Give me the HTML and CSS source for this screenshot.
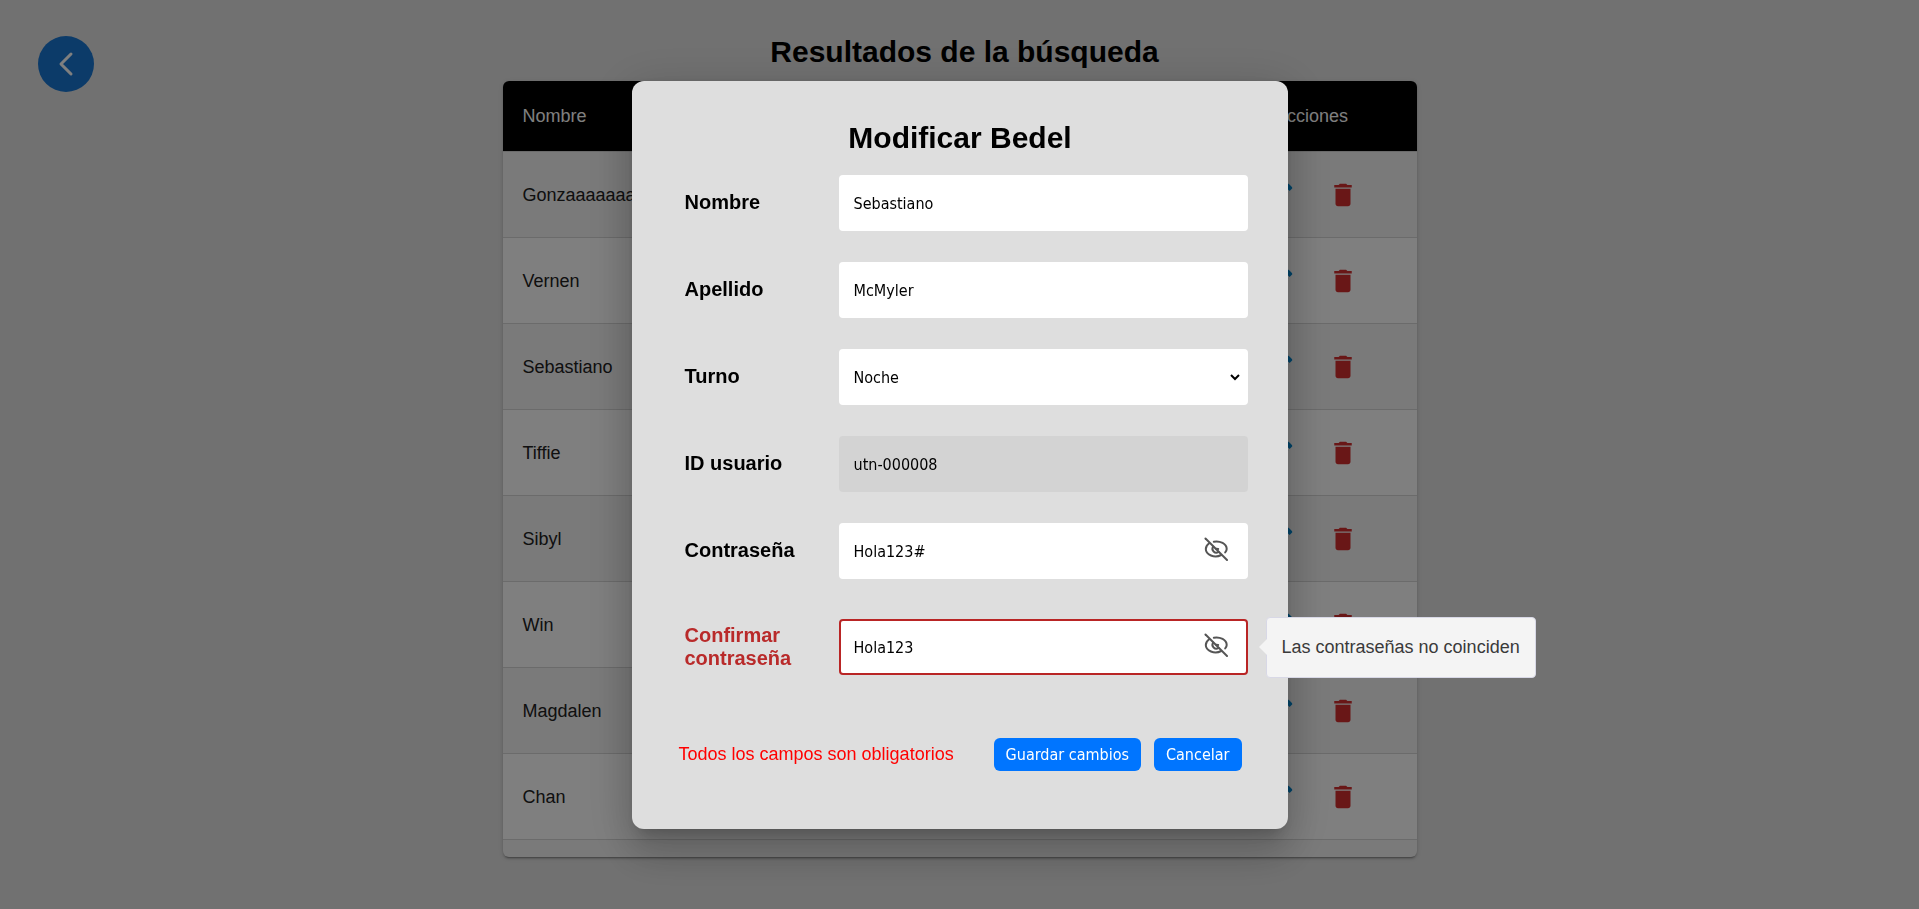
FILE: index.html
```html
<!DOCTYPE html>
<html lang="es">
<head>
<meta charset="utf-8">
<title>Modificar Bedel</title>
<link rel="stylesheet" href="styles.css">
</head>
<body>
<svg class="sprite" aria-hidden="true">
  <symbol id="edit" viewBox="0 0 24 24"><path d="M3 17.25V21h3.75L17.81 9.94l-3.75-3.75L3 17.25zM20.71 7.04c.39-.39.39-1.02 0-1.41l-2.34-2.34c-.39-.39-1.02-.39-1.41 0l-1.83 1.83 3.75 3.75 1.83-1.83z"/></symbol>
  <symbol id="trash" viewBox="0 0 24 24"><path d="M6 19c0 1.1.9 2 2 2h8c1.1 0 2-.9 2-2V7H6v12zM19 4h-3.5l-1-1h-5l-1 1H5v2h14V4z"/></symbol>
  <symbol id="eye-off" viewBox="0 0 24 24"><g fill="none" stroke="currentColor" stroke-width="2" stroke-linecap="round"><path d="M1.500 1.500l21.500 21.500"/><path d="M9.800 4.700C16 3.400 22.700 7 22.700 12c0 1.300-.6 2.400-1.500 3.400"/><path d="M5.200 6.300C3.200 7.700 1.800 9.700 1.800 12c0 5.800 8.600 9.400 15.400 6"/><path d="M9.200 9.600a3.800 3.800 0 0 0 5.300 5.300"/><path d="M12.200 11.800l2 .2"/></g></symbol>
</svg>
<div class="page">
  <div class="side">
    <button class="back" type="button" aria-label="Volver"><svg viewBox="0 0 32 32"><path d="M21 6L11 16l10 10"/></svg></button>
  </div>
  <main>
    <h1 class="heading">Resultados de la búsqueda</h1>
    <div class="card">
      <table class="results">
        <thead><tr><th>Nombre</th><th class="actions">Acciones</th></tr></thead>
        <tbody>
          <tr><td>Gonzaaaaaaaaa</td><td class="actions"><button type="button" class="icon edit" aria-label="Editar"><svg><use href="#edit"/></svg></button><button type="button" class="icon trash" aria-label="Eliminar"><svg><use href="#trash"/></svg></button></td></tr>
          <tr><td>Vernen</td><td class="actions"><button type="button" class="icon edit" aria-label="Editar"><svg><use href="#edit"/></svg></button><button type="button" class="icon trash" aria-label="Eliminar"><svg><use href="#trash"/></svg></button></td></tr>
          <tr><td>Sebastiano</td><td class="actions"><button type="button" class="icon edit" aria-label="Editar"><svg><use href="#edit"/></svg></button><button type="button" class="icon trash" aria-label="Eliminar"><svg><use href="#trash"/></svg></button></td></tr>
          <tr><td>Tiffie</td><td class="actions"><button type="button" class="icon edit" aria-label="Editar"><svg><use href="#edit"/></svg></button><button type="button" class="icon trash" aria-label="Eliminar"><svg><use href="#trash"/></svg></button></td></tr>
          <tr><td>Sibyl</td><td class="actions"><button type="button" class="icon edit" aria-label="Editar"><svg><use href="#edit"/></svg></button><button type="button" class="icon trash" aria-label="Eliminar"><svg><use href="#trash"/></svg></button></td></tr>
          <tr><td>Win</td><td class="actions"><button type="button" class="icon edit" aria-label="Editar"><svg><use href="#edit"/></svg></button><button type="button" class="icon trash" aria-label="Eliminar"><svg><use href="#trash"/></svg></button></td></tr>
          <tr><td>Magdalen</td><td class="actions"><button type="button" class="icon edit" aria-label="Editar"><svg><use href="#edit"/></svg></button><button type="button" class="icon trash" aria-label="Eliminar"><svg><use href="#trash"/></svg></button></td></tr>
          <tr><td>Chan</td><td class="actions"><button type="button" class="icon edit" aria-label="Editar"><svg><use href="#edit"/></svg></button><button type="button" class="icon trash" aria-label="Eliminar"><svg><use href="#trash"/></svg></button></td></tr>
        </tbody>
      </table>
    </div>
  </main>
</div>
<div class="overlay">
  <form class="modal" role="dialog" aria-labelledby="modal-title">
    <h2 class="modal-title" id="modal-title">Modificar Bedel</h2>
    <div class="fields">
      <div class="field"><label for="nombre">Nombre</label><input class="control" id="nombre" type="text" value="Sebastiano"></div>
      <div class="field"><label for="apellido">Apellido</label><input class="control" id="apellido" type="text" value="McMyler"></div>
      <div class="field"><label for="turno">Turno</label><select class="control" id="turno"><option>Noche</option></select></div>
      <div class="field"><label for="usuario">ID usuario</label><input class="control locked" id="usuario" type="text" value="utn-000008" readonly></div>
      <div class="field"><label for="clave">Contraseña</label><div class="wrap"><input class="control" id="clave" type="text" value="Hola123#"><button type="button" class="toggle" aria-label="Ocultar contraseña"><svg><use href="#eye-off"/></svg></button></div></div>
    </div>
    <div class="field invalid">
      <label for="confirmar">Confirmar contraseña</label>
      <div class="wrap"><input class="control" id="confirmar" type="text" value="Hola123"><button type="button" class="toggle" aria-label="Ocultar confirmación"><svg><use href="#eye-off"/></svg></button><div class="tooltip" role="tooltip">Las contraseñas no coinciden</div></div>
    </div>
    <div class="footer">
      <p class="error">Todos los campos son obligatorios</p>
      <button class="btn" type="submit">Guardar cambios</button>
      <button class="btn" type="button">Cancelar</button>
    </div>
  </form>
</div>
</body>
</html>
```

FILE: styles.css
```css
* { box-sizing: border-box; }

body {
  margin: 0;
  min-height: 100vh;
  background: #e2e2e2;
  color: #000;
  font-family: "Liberation Sans", Arial, sans-serif;
  font-size: 18px;
}

button { font: inherit; cursor: pointer; }

.sprite { display: none; }

/* Results page */
.page {
  display: grid;
  grid-template-columns: 1fr minmax(0, 914px) 1fr;
  padding: 0 38px;
}

.side { padding-top: 36px; }

.back {
  display: grid;
  place-items: center;
  width: 56px;
  height: 56px;
  padding: 0;
  border: 0;
  border-radius: 50%;
  background: #1976d2;
}

.back svg {
  width: 32px;
  height: 32px;
  fill: none;
  stroke: #fff;
  stroke-width: 3;
  stroke-linecap: round;
  stroke-linejoin: round;
}

.heading {
  margin: 0;
  padding: 34px 0 11px 10px;
  font-size: 30px;
  line-height: 36px;
  text-align: center;
}

.card {
  padding-bottom: 17px;
  border-radius: 6px;
  overflow: hidden;
  background: #f4f4f4;
  box-shadow: 0 3px 1px -2px rgba(0, 0, 0, .2), 0 2px 2px rgba(0, 0, 0, .14), 0 1px 5px rgba(0, 0, 0, .12);
}

.results {
  width: 100%;
  table-layout: fixed;
  border-collapse: separate;
  border-spacing: 0;
}

.results th,
.results td {
  padding: 1px 20px 0;
  border-bottom: 1px solid #d6d6d6;
  text-align: left;
}

.results th {
  height: 71px;
  background: #000;
  background-clip: padding-box;
  color: #fff;
  font-weight: 400;
}

.results td {
  height: 86px;
  color: #212121;
}

.results tr:nth-child(even) td { background: #fff; }

.results .actions {
  width: 210px;
  text-align: center;
}

.icon {
  padding: 0;
  border: 0;
  background: none;
  vertical-align: middle;
}

.icon + .icon { margin-left: 32px; }

.icon svg {
  display: block;
  width: 30px;
  height: 30px;
  fill: currentColor;
}

.edit { color: #0288d1; }
.trash { color: #d32f2f; }

/* Dialog */
.overlay {
  position: fixed;
  inset: 0;
  display: grid;
  place-items: center;
  background: rgba(0, 0, 0, .5);
}

.modal {
  width: 100%;
  max-width: 656px;
  padding: 39px 40px 58px 53px;
  border-radius: 12px;
  background: #dedede;
  box-shadow: 0 11px 15px -7px rgba(0, 0, 0, .2), 0 24px 38px 3px rgba(0, 0, 0, .14), 0 9px 46px 8px rgba(0, 0, 0, .12);
}

.modal-title {
  margin: 0 12px 19px 0;
  font-size: 30px;
  line-height: 36px;
  text-align: center;
}

.fields {
  display: grid;
  gap: 31px;
}

.field {
  display: grid;
  grid-template-columns: 154px 1fr;
  align-items: center;
}

.field label {
  padding-right: 24px;
  font-size: 20px;
  font-weight: 700;
  line-height: 23px;
}

.control {
  width: 100%;
  height: 56px;
  padding: 2px 13px 0;
  border: 2px solid #fff;
  border-radius: 4px;
  background: #fff;
  color: #000;
  font-family: "DejaVu Sans Condensed", Tahoma, sans-serif;
  font-size: 16px;
}

select.control {
  padding: 2px 0 0 9px;
  border-right-width: 5px;
}

.control.locked {
  border-color: #d3d3d3;
  background: #d3d3d3;
}

.wrap { position: relative; }

.wrap .control { padding-right: 52px; }

.toggle {
  position: absolute;
  top: 14px;
  right: 20px;
  padding: 0;
  border: 0;
  background: none;
  color: #555;
}

.toggle svg {
  display: block;
  width: 24px;
  height: 24px;
}

.invalid { margin-top: 40px; }
.invalid label { color: #b92a2a; }
.invalid .control { border-color: #b92525; }

.tooltip {
  position: absolute;
  top: -2px;
  left: calc(100% + 18px);
  padding: 19px 15px;
  border: 1px solid #d8d8e6;
  border-radius: 4px;
  background: #f4f4f4;
  color: #3a3a3a;
  line-height: 21px;
  white-space: nowrap;
}

.tooltip::before {
  content: "";
  position: absolute;
  top: 50%;
  right: 100%;
  border: 8px solid transparent;
  border-left-width: 0;
  border-right-color: #f4f4f4;
  transform: translateY(-50%);
}

.footer {
  display: flex;
  align-items: center;
  gap: 13px;
  margin-top: 63px;
  padding: 0 6px 0 0;
}

.error {
  flex: 1;
  margin: 0 0 0 -6px;
  color: #f00;
  line-height: 21px;
}

.btn {
  height: 33px;
  padding: 0 12px;
  border: 0;
  border-radius: 6px;
  background: #0075ff;
  color: #fff;
  font-family: "DejaVu Sans Condensed", Tahoma, sans-serif;
  font-size: 16px;
}
```
